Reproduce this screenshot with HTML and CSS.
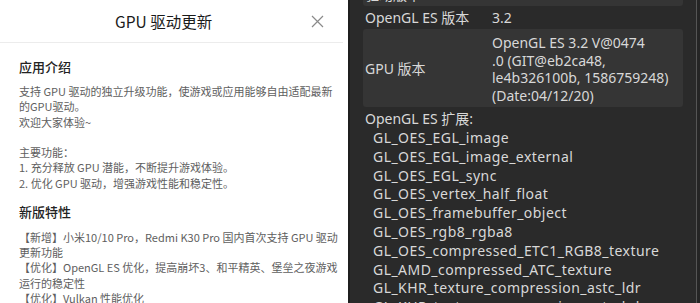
FILE: index.html
```html
<!DOCTYPE html>
<html lang="zh-CN">
<head>
    <meta charset="UTF-8">
    <meta name="viewport" content="width=device-width, initial-scale=1.0">
    <title>GPU 驱动更新</title>
    <link rel="stylesheet" href="styles.css">
</head>
<body>
    <div class="screen">
        <section class="sheet">
            <header class="sheet-head">
                <h1 class="sheet-title">GPU 驱动更新</h1>
                <svg class="close" width="13" height="13" viewBox="0 0 13 13">
                    <path d="M1 1 L12 12 M12 1 L1 12" stroke="#8a8a8a" stroke-width="1.2" fill="none"/>
                </svg>
            </header>
            <div class="sheet-body">
                <h2 class="sec-title">应用介绍</h2>
                <p class="sec-text intro">支持 GPU 驱动的独立升级功能，使游戏或应用能够自由适配最新<br>的GPU驱动。<br>欢迎大家体验~<br><br>主要功能：<br>1. 充分释放 GPU 潜能，不断提升游戏体验。<br>2. 优化 GPU 驱动，增强游戏性能和稳定性。</p>
                <h2 class="sec-title second">新版特性</h2>
                <p class="sec-text news">【新增】小米10/10 Pro，Redmi K30 Pro 国内首次支持 GPU 驱动<br>更新功能<br>【优化】OpenGL ES 优化，提高崩坏3、和平精英、堡垒之夜游戏<br>运行的稳定性<br>【优化】Vulkan 性能优化</p>
            </div>
        </section>

        <section class="info">
            <div class="info-rows">
                <div class="row boxed"><span class="label">驱动版本</span><span class="value">1.0</span></div>
                <div class="row"><span class="label">OpenGL ES 版本</span><span class="value">3.2</span></div>
                <div class="row boxed tall">
                    <span class="label">GPU 版本</span>
                    <span class="value">OpenGL ES 3.2 V@0474<br>.0 (GIT@eb2ca48,<br>le4b326100b, 1586759248)<br>(Date:04/12/20)</span>
                </div>
            </div>
            <div class="ext">
                <div class="ext-title">OpenGL ES 扩展:</div>
                <ul class="ext-list">
                    <li>GL_OES_EGL_image</li>
                    <li>GL_OES_EGL_image_external</li>
                    <li>GL_OES_EGL_sync</li>
                    <li>GL_OES_vertex_half_float</li>
                    <li>GL_OES_framebuffer_object</li>
                    <li>GL_OES_rgb8_rgba8</li>
                    <li>GL_OES_compressed_ETC1_RGB8_texture</li>
                    <li>GL_AMD_compressed_ATC_texture</li>
                    <li>GL_KHR_texture_compression_astc_ldr</li>
                    <li>GL_KHR_texture_compression_astc_hdr</li>
                </ul>
            </div>
        </section>
    </div>
</body>
</html>
```

FILE: styles.css
```css
html, body {
    margin: 0;
    padding: 0;
    height: 100%;
    overflow: hidden;
}

body {
    background-color: #2a2a2a;
}

.screen {
    display: flex;
    width: 700px;
    height: 303px;
    overflow: hidden;
}

/* Left: light update sheet */
.sheet {
    width: 348px;
    flex-shrink: 0;
    background: #fff;
    font-family: "Noto Sans CJK SC", "Noto Sans", sans-serif;
    overflow: hidden;
}

.sheet-head {
    display: flex;
    align-items: center;
    height: 42px;
    margin-right: 5px;
    padding-left: 115px;
    padding-right: 19px;
    border-bottom: 1px solid #ececec;
}

.sheet-title {
    margin: 0;
    font-size: 15.5px;
    font-weight: 400;
    color: #1a1a1a;
}

.close {
    margin-left: auto;
}

.sheet-body {
    padding-left: 19px;
}

.sec-title {
    margin: 15px 0 0;
    font-size: 13px;
    line-height: 18px;
    font-weight: 500;
    color: #222;
}

.sec-title.second {
    margin-top: 12px;
}

.sec-text {
    margin: 0;
    font-size: 11px;
    line-height: 15.3px;
    color: #5e5e5e;
    white-space: nowrap;
}

.intro {
    margin-top: 8px;
}

.news {
    margin-top: 9px;
    line-height: 15.2px;
}

/* Right: dark GPU info */
.info {
    flex: 1;
    background: #2a2a2a;
    border-left: 2px solid #1f1f1f;
    padding: 0 17px 0 13px;
    box-shadow: inset -3px 0 0 #252525, inset -4px 0 0 #555;
    font-family: "Noto Sans", "Noto Sans CJK SC", sans-serif;
    font-size: 14px;
    color: #d8d8d8;
    overflow: hidden;
}

.info-rows {
    margin-top: -17px;
}

.row {
    display: grid;
    grid-template-columns: 127px 1fr;
    align-items: center;
    height: 23px;
    line-height: 23px;
    padding-left: 2px;
}

.row.boxed {
    background: #353535;
    border-radius: 3px;
}

.row.tall {
    height: auto;
    line-height: 17.5px;
    padding-top: 5px;
    padding-bottom: 3px;
}

.ext {
    padding-left: 2px;
    margin-top: 2px;
}

.ext-title {
    line-height: 19px;
}

.ext-list {
    list-style: none;
    margin: 0;
    padding: 1px 0 0 8px;
    line-height: 18.8px;
    letter-spacing: 0.45px;
}
```
